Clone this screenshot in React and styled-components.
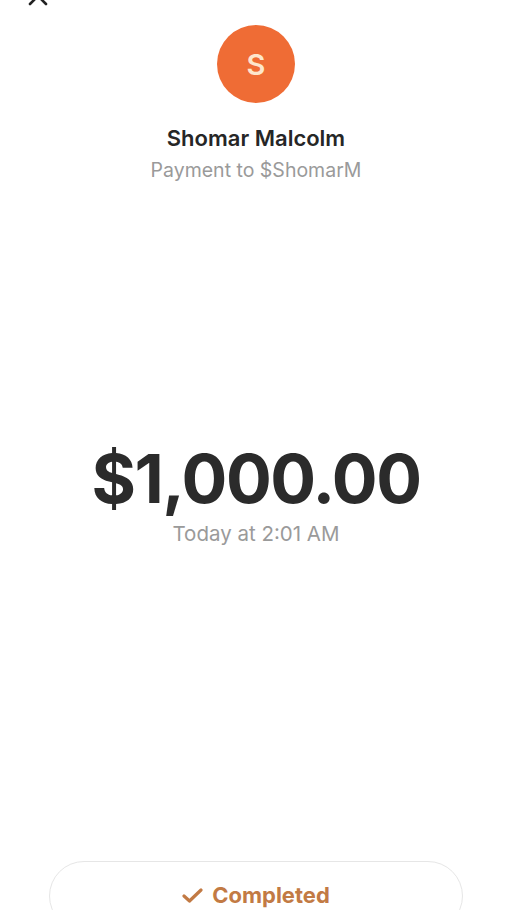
import React from "react";
import styled, { createGlobalStyle } from "styled-components";

const Global = createGlobalStyle`
  html, body { margin: 0; padding: 0; background: #ffffff; }
  body { font-family: Inter, "Noto Sans", sans-serif; -webkit-font-smoothing: antialiased; }
`;

const Page = styled.div`
  width: 512px;
  height: 910px;
  overflow: hidden;
  background: #fff;
  display: flex;
  flex-direction: column;
  align-items: center;
`;

const TopBar = styled.div`
  align-self: stretch;
  height: 25px;
  display: flex;
  align-items: flex-start;
  padding: 0 0 0 28px;
`;

const CloseIcon = styled.svg`
  width: 20px;
  height: 20px;
  margin-top: -14px;
  color: #222;
`;

const Avatar = styled.div`
  width: 78px;
  height: 78px;
  border-radius: 50%;
  background: #ef6c35;
  color: #fde6cc;
  display: flex;
  align-items: center;
  justify-content: center;
  font-size: 29px;
  font-weight: 600;
  line-height: 1;
`;

const Name = styled.div`
  margin-top: 22px;
  font-size: 22px;
  line-height: 26px;
  font-weight: 600;
  color: #262626;
`;

const Sub = styled.div`
  margin-top: ${(p) => p.$mt}px;
  font-size: ${(p) => p.$size}px;
  line-height: 24px;
  font-weight: 400;
  color: #9a9a9a;
`;

const Amount = styled.div`
  margin-top: 256px;
  font-size: 68px;
  line-height: 80px;
  font-weight: 700;
  color: #2b2b2b;
  letter-spacing: -1.5px;
`;

const StatusPill = styled.div`
  margin-top: auto;
  margin-bottom: -21px;
  width: 414px;
  height: 70px;
  box-sizing: border-box;
  border: 1px solid #e6e6e6;
  border-radius: 36px;
  display: flex;
  justify-content: center;
  align-items: flex-start;
  gap: 9px;
  padding-top: 20px;
  color: #c27a44;
  font-size: 22px;
  line-height: 26px;
  font-weight: 700;
`;

const CheckIcon = styled.svg`
  width: 21px;
  height: 15px;
  margin-top: 6px;
`;

export default function App() {
  return (
    <>
      <Global />
      <Page>
        <TopBar>
          <CloseIcon viewBox="0 0 20 20" fill="none" stroke="currentColor" strokeWidth="2.6" strokeLinecap="round">
            <path d="M2 2 L18 18 M18 2 L2 18" />
          </CloseIcon>
        </TopBar>
        <Avatar>S</Avatar>
        <Name>Shomar Malcolm</Name>
        <Sub $mt={7} $size={19.5}>Payment to $ShomarM</Sub>
        <Amount>$1,000.00</Amount>
        <Sub $mt={4} $size={20.5}>Today at 2:01 AM</Sub>
        <StatusPill>
          <CheckIcon viewBox="0 0 21 15" fill="none" stroke="currentColor" strokeWidth="3.2" strokeLinecap="round" strokeLinejoin="round">
            <path d="M2 8 L7.5 13 L19 2" />
          </CheckIcon>
          Completed
        </StatusPill>
      </Page>
    </>
  );
}
